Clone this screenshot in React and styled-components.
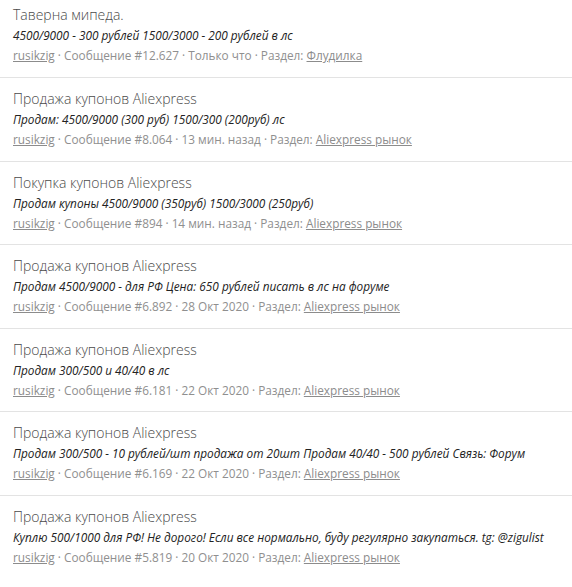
import React from 'react';
import styled, { createGlobalStyle } from 'styled-components';

const GlobalStyle = createGlobalStyle`
  body {
    margin: 0;
    background: #fff;
    font-family: "Open Sans", "Noto Sans", sans-serif;
  }
`;

const List = styled.ol`
  list-style: none;
  margin: 0;
  padding: 0;
`;

const Item = styled.li`
  padding: 11px 13px 11.6px;
  border-bottom: 1px solid #e3e3e3;

  &:first-child {
    padding-top: 5.4px;
  }

  &:last-child {
    border-bottom: none;
  }
`;

const Title = styled.h3`
  margin: 0;
  font-size: 14px;
  font-weight: 300;
  line-height: 20px;
  color: #4a4a4a;
`;

const Snippet = styled.div`
  font-size: 11.8px;
  font-style: italic;
  line-height: 20px;
  color: #222;
  white-space: nowrap;
`;

const Meta = styled.div`
  font-size: 11.8px;
  line-height: 20px;
  color: #8f8f8f;
`;

const MetaLink = styled.a`
  color: #8c8c8c;
  text-decoration: underline;
`;

const results = [
  {
    title: 'Таверна мипеда.',
    snippet: '4500/9000 - 300 рублей 1500/3000 - 200 рублей в лс',
    post: '12.627',
    time: 'Только что',
    forum: 'Флудилка',
  },
  {
    title: 'Продажа купонов Aliexpress',
    snippet: 'Продам: 4500/9000 (300 руб) 1500/300 (200руб) лс',
    post: '8.064',
    time: '13 мин. назад',
    forum: 'Aliexpress рынок',
  },
  {
    title: 'Покупка купонов Aliexpress',
    snippet: 'Продам купоны 4500/9000 (350руб) 1500/3000 (250руб)',
    post: '894',
    time: '14 мин. назад',
    forum: 'Aliexpress рынок',
  },
  {
    title: 'Продажа купонов Aliexpress',
    snippet: 'Продам 4500/9000 - для РФ Цена: 650 рублей писать в лс на форуме',
    post: '6.892',
    time: '28 Окт 2020',
    forum: 'Aliexpress рынок',
  },
  {
    title: 'Продажа купонов Aliexpress',
    snippet: 'Продам 300/500 и 40/40 в лс',
    post: '6.181',
    time: '22 Окт 2020',
    forum: 'Aliexpress рынок',
  },
  {
    title: 'Продажа купонов Aliexpress',
    snippet: 'Продам 300/500 - 10 рублей/шт продажа от 20шт Продам 40/40 - 500 рублей Связь: Форум',
    post: '6.169',
    time: '22 Окт 2020',
    forum: 'Aliexpress рынок',
  },
  {
    title: 'Продажа купонов Aliexpress',
    snippet: 'Куплю 500/1000 для РФ! Не дорого! Если все нормально, буду регулярно закупаться. tg: @zigulist',
    post: '5.819',
    time: '20 Окт 2020',
    forum: 'Aliexpress рынок',
  },
];

const App = () => (
  <>
    <GlobalStyle />
    <List>
      {results.map((r, i) => (
        <Item key={i}>
          <Title>{r.title}</Title>
          <Snippet>{r.snippet}</Snippet>
          <Meta>
            <MetaLink href="#">rusikzig</MetaLink> · Сообщение #{r.post} · {r.time} · Раздел:{' '}
            <MetaLink href="#">{r.forum}</MetaLink>
          </Meta>
        </Item>
      ))}
    </List>
  </>
);

export default App;
